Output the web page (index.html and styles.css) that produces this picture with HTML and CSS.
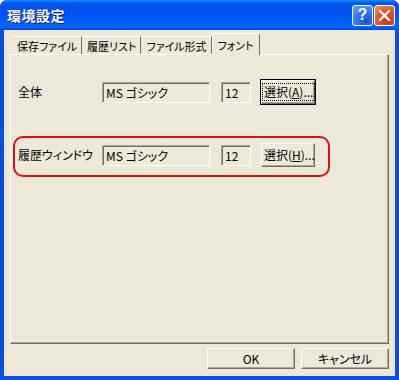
FILE: index.html
```html
<!DOCTYPE html>
<html lang="ja">
<head>
    <meta charset="UTF-8">
    <title>環境設定</title>
    <link rel="stylesheet" href="styles.css">
</head>
<body>

<!-- dialog window -->
<div class="window">
    <div class="titlebar">
        <span class="title">環境設定</span>
        <div class="captionButtons">
            <span class="capBtn helpBtn">?</span>
            <span class="capBtn closeBtn">
                <svg width="13" height="13" viewBox="0 0 13 13">
                    <path d="M2 2 L11 11 M11 2 L2 11" stroke="#fff" stroke-width="2.2" stroke-linecap="square"/>
                </svg>
            </span>
        </div>
    </div>

    <div class="client">
        <!-- tab strip -->
        <div class="tabs">
            <span class="tab">保存ファイル</span>
            <span class="tab">履歴リスト</span>
            <span class="tab">ファイル形式</span>
            <span class="tab active">フォント</span>
        </div>

        <!-- font page -->
        <div class="panel">
            <div class="fontRow">
                <span class="label">全体</span>
                <span class="field nameField">MS ゴシック</span>
                <span class="field sizeField">12</span>
                <button class="btn pickBtn focused"><span class="focusRect">選択(<u>A</u>)...</span></button>
            </div>
            <div class="fontRow marked">
                <span class="label">履歴ウィンドウ</span>
                <span class="field nameField">MS ゴシック</span>
                <span class="field sizeField">12</span>
                <button class="btn pickBtn"><span class="focusRect">選択(<u>H</u>)...</span></button>
            </div>
        </div>

        <div class="footer">
            <button class="btn footBtn">OK</button>
            <button class="btn footBtn">キャンセル</button>
        </div>
    </div>
</div>

</body>
</html>
```

FILE: styles.css
```css
body {
    margin: 0;
    font-family: "Noto Sans CJK JP", "Liberation Sans", sans-serif;
    font-size: 12px;
    font-feature-settings: "palt";
    color: #000;
    background: #fff;
}

.window {
    width: 399px;
    height: 380px;
    box-sizing: border-box;
    display: flex;
    flex-direction: column;
    background: #0a4fe0;
    border-radius: 7px 7px 0 0;
    overflow: hidden;
}

/* blue XP caption */
.titlebar {
    height: 30px;
    flex: none;
    display: flex;
    align-items: center;
    justify-content: space-between;
    padding: 0 4px 0 7px;
    background: linear-gradient(#0997ff 0%, #0053ee 10%, #0050ee 45%, #0066ff 85%, #0060ff 92%, #003dd7 100%);
}

.title {
    color: #fff;
    font-weight: bold;
    font-size: 14px;
    letter-spacing: 0.5px;
    font-feature-settings: normal;
    text-shadow: 1px 1px 0 #0a1883;
}

.captionButtons {
    display: flex;
    gap: 1px;
}

.capBtn {
    width: 21px;
    height: 21px;
    box-sizing: border-box;
    border: 1px solid #fff;
    border-radius: 3px;
    display: flex;
    align-items: center;
    justify-content: center;
}

.helpBtn {
    background: radial-gradient(circle at 70% 80%, #1b50d8 0%, #3c7cf7 55%, #6aa0ff 100%);
    color: #fff;
    font-family: "Liberation Sans", sans-serif;
    font-weight: bold;
    font-size: 16px;
}

.closeBtn {
    background: radial-gradient(circle at 70% 80%, #c43a10 0%, #e0582e 55%, #f19677 100%);
}

.client {
    flex: 1;
    margin: 0 4px 4px 4px;
    background: #ece9d8;
    padding: 3px 6px 7px 6px;
    display: flex;
    flex-direction: column;
}

/* tabs */
.tabs {
    height: 21px;
    display: flex;
    align-items: flex-end;
    padding-left: 2px;
    font-size: 11px;
}

.tab {
    height: 18px;
    box-sizing: border-box;
    padding: 1px 4px 0 5px;
    border-top: 1px solid #fff;
    border-right: 1px solid #716f64;
    line-height: 16px;
    white-space: nowrap;
}

.tab.active {
    height: 22px;
    margin-bottom: -1px;
    padding: 3px 5px 0 5px;
    background: #ece9d8;
    border-left: 1px solid #fff;
    border-right: 1px solid #716f64;
    border-radius: 2px 2px 0 0;
    position: relative;
    z-index: 1;
}

.panel {
    height: 290px;
    box-sizing: border-box;
    border-top: 1px solid #fff;
    border-left: 1px solid #fff;
    border-right: 1px solid #716f64;
    border-bottom: 1px solid #716f64;
    box-shadow: inset -1px -1px 0 #aca899;
    padding: 18px 0 0 2px;
    display: flex;
    flex-direction: column;
    gap: 22px;
}

.fontRow {
    width: 317px;
    height: 41px;
    box-sizing: border-box;
    border: 2px solid transparent;
    border-radius: 10px;
    padding: 5px 13px 0 3px;
    display: grid;
    grid-template-columns: 73px 108px 30px 54px;
    column-gap: 11px;
    align-items: start;
}

.fontRow.marked {
    border-color: #dd1010;
}

.label {
    height: 24px;
    line-height: 24px;
    white-space: nowrap;
}

.field {
    height: 21px;
    margin-top: 2px;
    box-sizing: border-box;
    border-top: 1px solid #aca899;
    border-left: 1px solid #aca899;
    border-right: 1px solid #fff;
    border-bottom: 1px solid #fff;
    box-shadow: inset 1px 1px 0 #716f64;
    padding: 1px 0 0 3px;
    line-height: 17px;
    white-space: nowrap;
}

.btn {
    font-family: inherit;
    font-size: 12px;
    font-feature-settings: "palt";
    color: #000;
    background: #ece9d8;
    box-sizing: border-box;
    border-top: 1px solid #fff;
    border-left: 1px solid #fff;
    border-right: 1px solid #716f64;
    border-bottom: 1px solid #716f64;
    box-shadow: inset -1px -1px 0 #aca899;
    padding: 0;
    white-space: nowrap;
}

.pickBtn {
    width: 54px;
    height: 24px;
    margin-left: -1px;
}

.focusRect {
    display: inline-block;
    padding: 0 1px;
    line-height: 16px;
    border: 1px dotted transparent;
}

.pickBtn.focused {
    outline: 1px solid #000;
}

.pickBtn.focused .focusRect {
    border-color: #000;
}

.footer {
    margin-top: 4px;
    display: flex;
    justify-content: flex-end;
    gap: 6px;
}

.footBtn {
    width: 88px;
    height: 21px;
}
```
